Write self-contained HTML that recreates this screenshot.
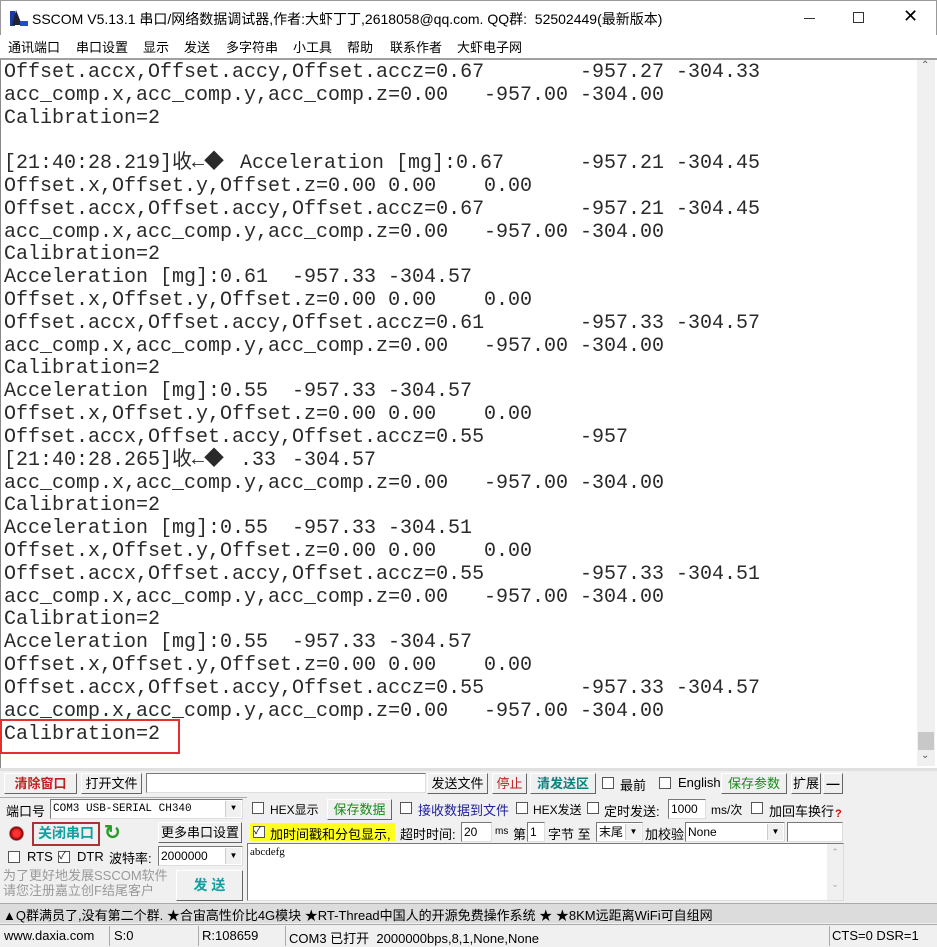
<!DOCTYPE html>
<html><head><meta charset="utf-8"><style>
*{margin:0;padding:0;box-sizing:border-box}
body{width:937px;height:947px;background:#f0f0f0;font-family:"Liberation Sans","Noto Sans CJK SC",sans-serif;font-size:13px;color:#000;position:relative;overflow:hidden}
.a{position:absolute}
#title{left:0;top:0;width:937px;height:35px;background:#fff;border:1px solid #999;border-bottom:none}
#menu{left:0;top:35px;width:937px;height:23px;background:#fff;font-size:13px}
#menu span{position:absolute;top:2px}
#ta{left:0;top:58px;width:937px;height:710px;background:#fff;border-top:2px solid #a0a0a0;border-left:1px solid #888}
.l{position:absolute;left:4px;font-family:"Liberation Mono","Noto Sans CJK SC",monospace;font-size:20px;line-height:22px;white-space:pre;color:#2a2a2a}
.l b{font-weight:normal;position:absolute;top:0}
#sb{left:917px;top:60px;width:18px;height:706px;background:#f0f0f0}
.btn{position:absolute;height:21px;border:1px solid #888;border-color:#fff #666 #666 #fff;background:#f0f0f0;text-align:center;line-height:19px;font-size:13px}
.inp{position:absolute;height:20px;background:#fff;border:1px solid #7a7a7a;border-color:#777 #ddd #ddd #777;font-size:12px;line-height:18px;padding-left:2px}
.cb{position:absolute;width:12px;height:12px;border:1px solid #555;background:#fff}
.t{position:absolute;font-size:13px;white-space:nowrap}
.dd{position:absolute;right:1px;top:1px;width:16px;height:16px;background:#f0f0f0;border-left:1px solid #ccc;font-size:8px;text-align:center;line-height:16px}
</style></head><body>
<div id="title" class="a">
 <svg class="a" style="left:9px;top:8px" width="18" height="18"><rect x="0" y="2" width="5" height="15" fill="#1b3aa0"/><polygon points="6,1 12,16 2,16" fill="#223"/><rect x="10" y="12" width="8" height="5" fill="#2050c0"/></svg>
 <div class="t" style="left:31px;top:8px;font-size:14px">SSCOM V5.13.1 串口/网络数据调试器,作者:大虾丁丁,2618058@qq.com. QQ群:&nbsp; 52502449(最新版本)</div>
 <div class="a" style="left:803px;top:17px;width:11px;height:1px;background:#333"></div>
 <div class="a" style="left:852px;top:11px;width:11px;height:11px;border:1px solid #333"></div>
 <div class="t" style="left:902px;top:5px;font-size:18px;font-weight:lighter">✕</div>
</div>
<div id="menu" class="a">
 <span style="left:8px">通讯端口</span><span style="left:76px">串口设置</span><span style="left:143px">显示</span><span style="left:184px">发送</span><span style="left:226px">多字符串</span><span style="left:293px">小工具</span><span style="left:347px">帮助</span><span style="left:390px">联系作者</span><span style="left:457px">大虾电子网</span>
</div>
<div id="ta" class="a"></div>
<div class="a" style="left:0;top:60px;width:937px;height:708px">
<div class="l" style="top:2px">Offset.accx,Offset.accy,Offset.accz=0.67<b style="left:576px">-957.27 -304.33</b></div>
<div class="l" style="top:25px">acc_comp.x,acc_comp.y,acc_comp.z=0.00<b style="left:480px">-957.00 -304.00</b></div>
<div class="l" style="top:48px">Calibration=2</div>
<div class="l" style="top:93px">[21:40:28.219]收←◆<b style="left:236px">Acceleration [mg]:0.67</b><b style="left:576px">-957.21 -304.45</b></div>
<div class="l" style="top:116px">Offset.x,Offset.y,Offset.z=0.00 0.00<b style="left:480px">0.00</b></div>
<div class="l" style="top:139px">Offset.accx,Offset.accy,Offset.accz=0.67<b style="left:576px">-957.21 -304.45</b></div>
<div class="l" style="top:162px">acc_comp.x,acc_comp.y,acc_comp.z=0.00<b style="left:480px">-957.00 -304.00</b></div>
<div class="l" style="top:184px">Calibration=2</div>
<div class="l" style="top:207px">Acceleration [mg]:0.61<b style="left:288px">-957.33 -304.57</b></div>
<div class="l" style="top:230px">Offset.x,Offset.y,Offset.z=0.00 0.00<b style="left:480px">0.00</b></div>
<div class="l" style="top:253px">Offset.accx,Offset.accy,Offset.accz=0.61<b style="left:576px">-957.33 -304.57</b></div>
<div class="l" style="top:276px">acc_comp.x,acc_comp.y,acc_comp.z=0.00<b style="left:480px">-957.00 -304.00</b></div>
<div class="l" style="top:298px">Calibration=2</div>
<div class="l" style="top:321px">Acceleration [mg]:0.55<b style="left:288px">-957.33 -304.57</b></div>
<div class="l" style="top:344px">Offset.x,Offset.y,Offset.z=0.00 0.00<b style="left:480px">0.00</b></div>
<div class="l" style="top:367px">Offset.accx,Offset.accy,Offset.accz=0.55<b style="left:576px">-957</b></div>
<div class="l" style="top:390px">[21:40:28.265]收←◆<b style="left:236px">.33</b><b style="left:288px">-304.57</b></div>
<div class="l" style="top:413px">acc_comp.x,acc_comp.y,acc_comp.z=0.00<b style="left:480px">-957.00 -304.00</b></div>
<div class="l" style="top:435px">Calibration=2</div>
<div class="l" style="top:458px">Acceleration [mg]:0.55<b style="left:288px">-957.33 -304.51</b></div>
<div class="l" style="top:481px">Offset.x,Offset.y,Offset.z=0.00 0.00<b style="left:480px">0.00</b></div>
<div class="l" style="top:504px">Offset.accx,Offset.accy,Offset.accz=0.55<b style="left:576px">-957.33 -304.51</b></div>
<div class="l" style="top:527px">acc_comp.x,acc_comp.y,acc_comp.z=0.00<b style="left:480px">-957.00 -304.00</b></div>
<div class="l" style="top:549px">Calibration=2</div>
<div class="l" style="top:572px">Acceleration [mg]:0.55<b style="left:288px">-957.33 -304.57</b></div>
<div class="l" style="top:595px">Offset.x,Offset.y,Offset.z=0.00 0.00<b style="left:480px">0.00</b></div>
<div class="l" style="top:618px">Offset.accx,Offset.accy,Offset.accz=0.55<b style="left:576px">-957.33 -304.57</b></div>
<div class="l" style="top:641px">acc_comp.x,acc_comp.y,acc_comp.z=0.00<b style="left:480px">-957.00 -304.00</b></div>
<div class="l" style="top:664px">Calibration=2</div>
<div class="a" style="left:0;top:659px;width:180px;height:35px;border:2px solid #e03030"></div>
</div>
<div id="sb" class="a">
 <div class="t" style="left:4px;top:0;font-size:10px;color:#555">⌃</div>
 <div class="a" style="left:1px;top:672px;width:16px;height:18px;background:#c8c8c8"></div>
 <div class="t" style="left:4px;top:690px;font-size:10px;color:#555">⌄</div>
</div>
<div class="a" style="left:0;top:768px;width:937px;height:3px;background:#e0e0e0"></div>
<!-- row1 -->
<div class="btn" style="left:4px;top:773px;width:73px;color:#c02020;font-weight:bold">清除窗口</div>
<div class="btn" style="left:81px;top:773px;width:61px">打开文件</div>
<div class="inp" style="left:146px;top:773px;width:280px"></div>
<div class="btn" style="left:427px;top:773px;width:61px">发送文件</div>
<div class="btn" style="left:492px;top:773px;width:35px;color:#c02020">停止</div>
<div class="btn" style="left:530px;top:773px;width:66px;color:#108080;font-weight:bold">清发送区</div>
<div class="cb" style="left:602px;top:777px"></div><div class="t" style="left:620px;top:775px">最前</div>
<div class="cb" style="left:659px;top:777px"></div><div class="t" style="left:678px;top:775px">English</div>
<div class="btn" style="left:721px;top:773px;width:66px;color:#1a8a1a">保存参数</div>
<div class="btn" style="left:791px;top:773px;width:30px">扩展</div>
<div class="btn" style="left:823px;top:773px;width:20px;font-weight:bold">—</div>
<!-- left panel -->
<div class="a" style="left:0;top:797px;width:247px;height:106px;border-top:1px solid #aaa"></div>
<div class="t" style="left:6px;top:801px">端口号</div>
<div class="inp" style="left:50px;top:799px;width:193px;font-family:'Liberation Mono',monospace;font-size:11px">COM3 USB-SERIAL CH340<div class="dd">▼</div></div>
<div class="a" style="left:9px;top:826px;width:15px;height:15px;border-radius:50%;background:radial-gradient(circle,#f33 30%,#800 60%,#bbb 70%)"></div>
<div class="btn" style="left:32px;top:822px;width:68px;height:24px;border:2px solid #a33;color:#10a0a0;font-weight:bold;line-height:19px;font-size:14px">关闭串口</div>
<div class="t" style="left:104px;top:820px;font-size:20px;color:#2a9a2a;font-weight:bold">↻</div>
<div class="btn" style="left:158px;top:822px;width:84px">更多串口设置</div>
<div class="cb" style="left:8px;top:851px"></div><div class="t" style="left:27px;top:849px">RTS</div>
<div class="cb" style="left:58px;top:851px;font-size:10px;line-height:10px">✓</div><div class="t" style="left:77px;top:849px">DTR</div>
<div class="t" style="left:109px;top:848px">波特率:</div>
<div class="inp" style="left:158px;top:846px;width:85px">2000000<div class="dd">▼</div></div>
<div class="t" style="left:3px;top:868px;color:#999;line-height:15px">为了更好地发展SSCOM软件<br>请您注册嘉立创F结尾客户</div>
<div class="btn" style="left:176px;top:870px;width:67px;height:31px;line-height:29px;color:#10a0a0;font-weight:bold;font-size:14px">发 送</div>
<!-- right panel -->
<div class="cb" style="left:252px;top:802px"></div><div class="t" style="left:270px;top:801px;font-size:12px">HEX显示</div>
<div class="btn" style="left:327px;top:799px;width:65px;color:#1a8a1a">保存数据</div>
<div class="cb" style="left:400px;top:802px"></div><div class="t" style="left:418px;top:800px;color:#2020a0">接收数据到文件</div>
<div class="cb" style="left:516px;top:802px"></div><div class="t" style="left:533px;top:801px;font-size:12px">HEX发送</div>
<div class="cb" style="left:587px;top:802px"></div><div class="t" style="left:604px;top:801px">定时发送:</div>
<div class="inp" style="left:668px;top:799px;width:38px">1000</div>
<div class="t" style="left:711px;top:801px;font-size:12px">ms/次</div>
<div class="cb" style="left:751px;top:802px"></div><div class="t" style="left:769px;top:801px">加回车换行</div>
<div class="t" style="left:835px;top:808px;color:#d00;font-weight:bold;font-size:11px">?</div>
<div class="a" style="left:250px;top:823px;width:145px;height:18px;background:#ffff20"></div>
<div class="cb" style="left:253px;top:826px;font-size:10px;line-height:10px">✓</div><div class="t" style="left:270px;top:824px">加时间戳和分包显示,</div>
<div class="t" style="left:400px;top:824px">超时时间:</div>
<div class="inp" style="left:461px;top:822px;width:31px">20</div>
<div class="t" style="left:495px;top:826px;font-size:10px">ms</div>
<div class="t" style="left:513px;top:824px">第</div>
<div class="inp" style="left:527px;top:822px;width:18px">1</div>
<div class="t" style="left:548px;top:824px">字节 至</div>
<div class="inp" style="left:596px;top:822px;width:47px">末尾<div class="dd">▼</div></div>
<div class="t" style="left:645px;top:824px">加校验</div>
<div class="inp" style="left:685px;top:822px;width:100px">None<div class="dd">▼</div></div>
<div class="inp" style="left:787px;top:822px;width:56px"></div>
<div class="inp" style="left:247px;top:843px;width:597px;height:58px;font-family:'Liberation Serif',serif;font-size:11px;line-height:16px">abcdefg
 <div class="a" style="right:0;top:0;width:16px;height:56px;background:#f0f0f0;color:#aaa;font-size:9px;text-align:center">⌃<br><br>⌄</div></div>
<!-- marquee -->
<div class="a" style="left:0;top:903px;width:937px;height:20px;background:#dcdcdc;border-top:1px solid #aaa"></div>
<div class="t" style="left:3px;top:905px">▲Q群满员了,没有第二个群. ★合宙高性价比4G模块 ★RT-Thread中国人的开源免费操作系统 ★ ★8KM远距离WiFi可自组网</div>
<!-- status -->
<div class="a" style="left:0;top:924px;width:937px;height:23px;background:#f0f0f0;border-top:1px solid #aaa"></div>
<div class="t" style="left:4px;top:928px">www.daxia.com</div>
<div class="a" style="left:109px;top:926px;width:1px;height:20px;background:#aaa"></div><div class="t" style="left:114px;top:928px">S:0</div>
<div class="a" style="left:198px;top:926px;width:1px;height:20px;background:#aaa"></div><div class="t" style="left:202px;top:928px">R:108659</div>
<div class="a" style="left:285px;top:926px;width:1px;height:20px;background:#aaa"></div><div class="t" style="left:289px;top:928px">COM3 已打开&nbsp; 2000000bps,8,1,None,None</div>
<div class="a" style="left:829px;top:926px;width:1px;height:20px;background:#aaa"></div><div class="t" style="left:832px;top:928px">CTS=0 DSR=1</div>
</body></html>
